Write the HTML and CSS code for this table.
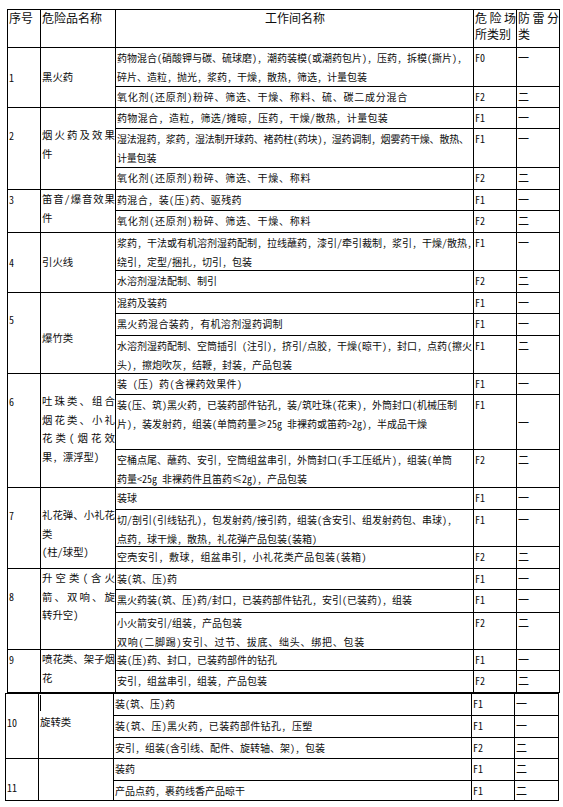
FILE: index.html
```html
<!DOCTYPE html>
<html lang="zh-CN">
<head>
<meta charset="utf-8">
<title>危险品工作间分类表</title>
<link rel="stylesheet" href="styles.css">
</head>
<body>
<div class="page">
  <div class="tbl t1">
    <div class="c h">序号</div>
    <div class="c h">危险品名称</div>
    <div class="c h hc">工作间名称</div>
    <div class="c h"><span class="jl">危险场</span>所类别</div>
    <div class="c h"><span class="jl">防雷分</span>类</div>

    <div class="c no s2 mid">1</div>
    <div class="c n s2 mid">黑火药</div>
    <div class="c w">药物混合(硝酸钾与碳、硫球磨), 潮药装模(或潮药包片), 压药, 拆模(撕片),<br>碎片、造粒, 抛光, 浆药, 干燥, 散热, 筛选, 计量包装</div>
    <div class="c f">F0</div>
    <div class="c l">一</div>
    <div class="c w ws">氧化剂(还原剂)粉碎、筛选、干燥、称料、硫、碳二成分混合</div>
    <div class="c f">F2</div>
    <div class="c l">二</div>

    <div class="c no s3 o18">2</div>
    <div class="c n s3 o18"><span class="jl">烟火药及效果</span>件</div>
    <div class="c w ws-s">药物混合, 造粒, 筛选/摊晾, 压药, 干燥/散热, 计量包装</div>
    <div class="c f">F1</div>
    <div class="c l">一</div>
    <div class="c w tight">湿法混药, 浆药, 湿法制开球药、褚药柱(药块), 湿药调制, 烟雾药干燥、散热、<br>计量包装</div>
    <div class="c f">F1</div>
    <div class="c l">一</div>
    <div class="c w ws">氧化剂(还原剂)粉碎、筛选、干燥、称料</div>
    <div class="c f">F2</div>
    <div class="c l">二</div>

    <div class="c no s2">3</div>
    <div class="c n s2"><span class="jl">笛音/爆音效果</span>件</div>
    <div class="c w ws-s">药混合, 装(压)药、驱残药</div>
    <div class="c f">F1</div>
    <div class="c l">一</div>
    <div class="c w ws">氧化剂(还原剂)粉碎、筛选、干燥、称料</div>
    <div class="c f">F2</div>
    <div class="c l">二</div>

    <div class="c no s2 mid">4</div>
    <div class="c n s2 mid">引火线</div>
    <div class="c w">浆药, 干法或有机溶剂湿药配制, 拉线蘸药, 漆引/牵引裁制, 浆引, 干燥/散热,<br>绕引, 定型/捆扎, 切引, 包装</div>
    <div class="c f">F1</div>
    <div class="c l">一</div>
    <div class="c w">水溶剂湿法配制、制引</div>
    <div class="c f">F2</div>
    <div class="c l">二</div>

    <div class="c no s3 o17">5</div>
    <div class="c n s3 o36">爆竹类</div>
    <div class="c w">混药及装药</div>
    <div class="c f">F1</div>
    <div class="c l">一</div>
    <div class="c w ws-s">黑火药混合装药, 有机溶剂湿药调制</div>
    <div class="c f">F1</div>
    <div class="c l">一</div>
    <div class="c w">水溶剂湿药配制、空筒插引 (注引), 挤引/点胶, 干燥(晾干), 封口, 点药(擦火<br>头), 擦炮吹灰, 结鞭, 封装, 产品包装</div>
    <div class="c f">F1</div>
    <div class="c l">二</div>

    <div class="c no s3 o18">6</div>
    <div class="c n s3 o18"><span class="jl">吐珠类、组合</span><span class="jl">烟花类、小礼</span><span class="jl">花类(烟花效</span>果, 漂浮型)</div>
    <div class="c w ws-s">装 (压) 药(含裸药效果件)</div>
    <div class="c f">F1</div>
    <div class="c l">一</div>
    <div class="c w">装(压、筑)黑火药, 已装药部件钻孔, 装/筑吐珠(花束), 外筒封口(机械压制<br>片), 装发射药, 组装(单筒药量≥25g 非裸药或笛药&gt;2g), 半成品干燥</div>
    <div class="c f">F1</div>
    <div class="c l mid">一</div>
    <div class="c w">空桶点尾、蘸药、安引, 空筒组盆串引, 外筒封口(手工压纸片), 组装(单筒<br>药量&lt;25g 非裸药件且笛药≤2g), 产品包装</div>
    <div class="c f">F2</div>
    <div class="c l">二</div>

    <div class="c no s3 o18">7</div>
    <div class="c n s3 o18"><span class="jl">礼花弹、小礼花</span>类<br>(柱/球型)</div>
    <div class="c w">装球</div>
    <div class="c f">F1</div>
    <div class="c l">一</div>
    <div class="c w">切/剖引(引线钻孔), 包发射药/接引药, 组装(含安引、组发射药包、串球),<br>点药, 球干燥, 散热, 礼花弹产品包装(装箱)</div>
    <div class="c f">F1</div>
    <div class="c l">一</div>
    <div class="c w ws-s">空壳安引, 敷球, 组盆串引, 小礼花类产品包装(装箱)</div>
    <div class="c f">F2</div>
    <div class="c l">二</div>

    <div class="c no s3 o18">8</div>
    <div class="c n s3"><span class="jl">升空类(含火</span><span class="jl">箭、双响、旋</span>转升空)</div>
    <div class="c w">装(筑、压)药</div>
    <div class="c f">F1</div>
    <div class="c l">一</div>
    <div class="c w">黑火药装(筑、压)药/封口, 已装药部件钻孔, 安引(已装药), 组装</div>
    <div class="c f">F1</div>
    <div class="c l">一</div>
    <div class="c w">小火箭安引/组装, 产品包装<br><span class="ws">双响(二脚踢)安引、过节、拔底、绌头、绑把、包装</span></div>
    <div class="c f">F2</div>
    <div class="c l">二</div>

    <div class="c no s2">9</div>
    <div class="c n s2"><span class="jl">喷花类、架子烟</span>花</div>
    <div class="c w">装(压)药、封口, 已装药部件的钻孔</div>
    <div class="c f">F1</div>
    <div class="c l">一</div>
    <div class="c w">安引, 组盆串引, 组装, 产品包装</div>
    <div class="c f">F2</div>
    <div class="c l">二</div>
  </div>

  <div class="tbl t2">
    <div class="c no s3 o19">10</div>
    <div class="c n s3 o19 nick">旋转类</div>
    <div class="c w">装(筑、压)药</div>
    <div class="c f">F1</div>
    <div class="c l">一</div>
    <div class="c w ws-s">装(筑、压)黑火药, 已装药部件钻孔, 压塑</div>
    <div class="c f">F1</div>
    <div class="c l">一</div>
    <div class="c w">安引, 组装(含引线、配件、旋转轴、架), 包装</div>
    <div class="c f">F2</div>
    <div class="c l">二</div>

    <div class="c no s2 o19">11</div>
    <div class="c n s2"></div>
    <div class="c w">装药</div>
    <div class="c f">F1</div>
    <div class="c l">二</div>
    <div class="c w">产品点药, 裹药线香产品晾干</div>
    <div class="c f">F1</div>
    <div class="c l">二</div>
  </div>
</div>
</body>
</html>
```

FILE: styles.css
```css
html, body {
  margin: 0;
  padding: 0;
  background: #ffffff;
}

body {
  font-family: "Noto Sans CJK SC", "Noto Sans", sans-serif;
  color: #0d0d0d;
}

.page {
  padding-top: 9px;
}

.tbl {
  display: grid;
  width: max-content;
  background: #000000;
  gap: 1px;
  padding: 1px;
}

.t1 {
  margin-left: 7px;
  grid-template-columns: 32px 74px 357px 42px 42px;
  grid-template-rows:
    37px
    38px 20px
    20px 38px 21px
    20px 21px
    37px 21px
    20px 21px 37px
    20px 54px 37px
    21px 36px 21px
    20px 22px 36px
    20px 21px;
}

.t2 {
  margin-left: 5px;
  grid-template-columns: 32px 74px 357px 42px 43px;
  grid-template-rows: 21px 21px 20px 21px 19px;
}

.c {
  background: #ffffff;
  overflow: hidden;
  white-space: nowrap;
  font-size: 10px;
  line-height: 19px;
  padding: 0 0 0 1px;
  font-feature-settings: "hwid" 1;
}

.s2 { grid-row: span 2; }
.s3 { grid-row: span 3; }

.h {
  font-size: 12px;
  line-height: 16px;
  white-space: normal;
  font-feature-settings: normal;
}

.hc {
  text-align: center;
}

.jl {
  display: block;
  text-align: justify;
  text-align-last: justify;
}

.no {
  font-size: 10px;
}

.n {
  font-size: 10.4px;
  line-height: 18.5px;
}

.w {
  font-size: 10px;
  padding-left: 1px;
}

.ws {
  letter-spacing: 0.75px;
}

.ws-s {
  letter-spacing: 0.35px;
}

.tight {
  letter-spacing: -0.2px;
}

.f {
  font-size: 10px;
}

.l {
  font-size: 11px;
}

.mid {
  display: flex;
  flex-direction: column;
  justify-content: center;
}

.o17 { padding-top: 17px; }
.o18 { padding-top: 18px; }
.o19 { padding-top: 19px; }
.o36 { padding-top: 36px; }

.nick {
  position: relative;
}

.nick::before {
  content: "";
  position: absolute;
  left: 1px;
  top: 1px;
  width: 1px;
  height: 16px;
  background: #000000;
}
```
